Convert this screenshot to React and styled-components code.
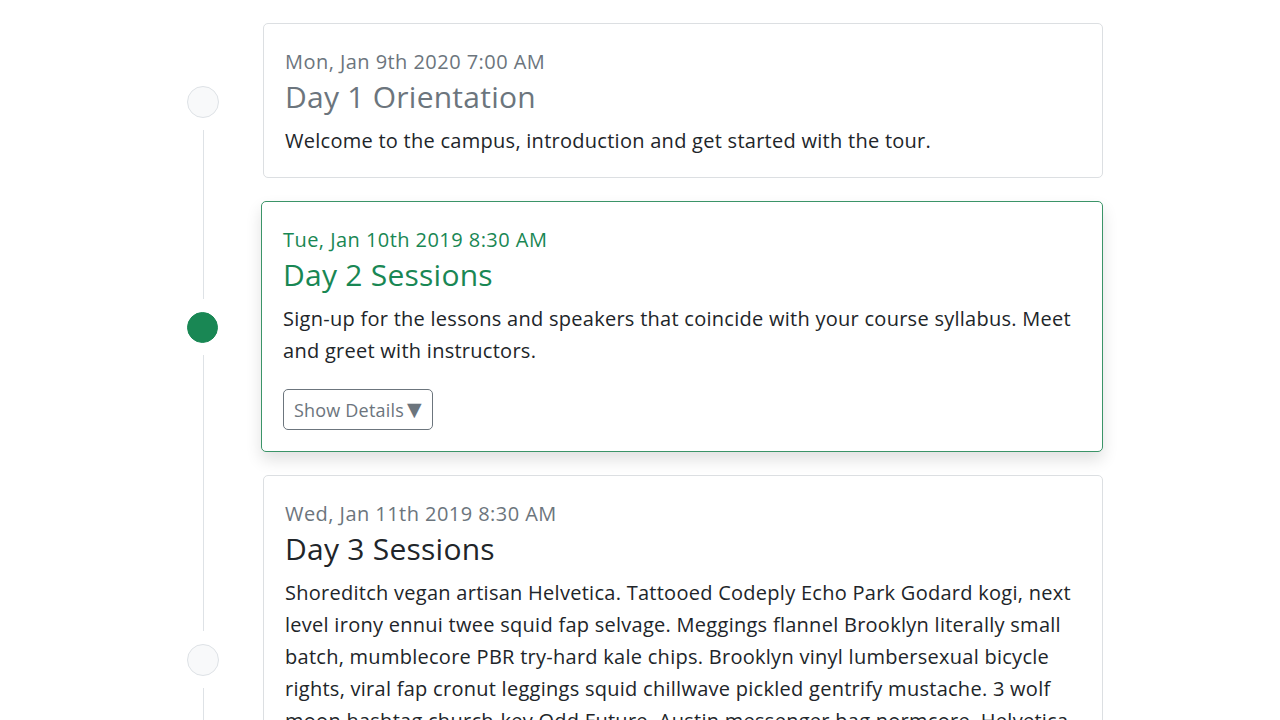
import React from 'react'
import styled, { createGlobalStyle } from 'styled-components'

const GlobalStyle = createGlobalStyle`
    body {
        margin: 0;
        background: #fff;
        font-family: "Open Sans", "Noto Sans", sans-serif;
        color: #212529;
    }
`

const Timeline = styled.div`
    width: 916px;
    margin-left: 187px;
    padding-top: 12px;
`

const DotColumn = styled.div`
    width: 32px;
    flex-shrink: 0;
    display: flex;
    flex-direction: column;
    align-items: center;
`

const Segment = styled.div`
    flex: 1;
    width: 1px;
    background: ${props => (props.$blank ? 'transparent' : '#dee2e6')};
    margin: ${props => (props.$upper ? '0 0 13px' : '12px 0 0')};
`

const Dot = styled.div`
    width: ${props => (props.$active ? '31px' : '32px')};
    height: ${props => (props.$active ? '31px' : '32px')};
    margin-right: ${props => (props.$active ? '1px' : '0')};
    border-radius: 50%;
    box-sizing: border-box;
    background: ${props => (props.$active ? '#198754' : '#f8f9fa')};
    border: 1px solid ${props => (props.$active ? '#198754' : '#dee2e6')};
`

const CardColumn = styled.div`
    flex: 1;
    padding: 11px 0 12px 44px;
`

const Row = styled.div`
    display: flex;
    align-items: stretch;

    &:last-child ${CardColumn} {
        padding-bottom: 32px;
    }
`

const Card = styled.div`
    border-width: 1px;
    border-style: solid;
    border-color: ${props => (props.$active ? '#3b9468' : '#dcdfe2')};
    border-radius: 5px;
    padding: 20px 21px ${props => (props.$active ? '21px' : '20px')} 21px;
    background: #fff;
    margin-left: ${props => (props.$active ? '-2px' : '0')};
    box-shadow: ${props => (props.$active ? '0 8px 16px rgba(0, 0, 0, 0.12)' : 'none')};
`

const EventDate = styled.div`
    font-size: 20px;
    line-height: 28px;
    letter-spacing: 0.45px;
    margin-top: 4px;
    color: ${props => (props.$active ? '#198754' : '#6c757d')};
`

const Title = styled.h4`
    margin: 3px 0 10px;
    font-size: 30px;
    line-height: 36px;
    letter-spacing: 0.25px;
    font-weight: 400;
    color: ${props => props.$color};
`

const Body = styled.p`
    margin: 0;
    font-size: 20px;
    line-height: 32px;
    letter-spacing: 0.27px;
    color: #212529;
`

const DetailsButton = styled.button`
    margin-top: 22px;
    height: 41px;
    padding: 0 10px;
    display: flex;
    align-items: center;
    gap: 3px;
    background: #fff;
    border: 1px solid #6c757d;
    border-radius: 5px;
    color: #6c757d;
    font-family: inherit;
    font-size: 18px;
    letter-spacing: 0.2px;
    cursor: pointer;
`

const Caret = styled.span`
    font-family: "DejaVu Sans", sans-serif;
    font-size: 19px;
    line-height: 1;
    color: #6c757d;
`

const events = [
    {
        date: 'Mon, Jan 9th 2020 7:00 AM',
        title: 'Day 1 Orientation',
        titleColor: '#6c757d',
        text: 'Welcome to the campus, introduction and get started with the tour.'
    },
    {
        date: 'Tue, Jan 10th 2019 8:30 AM',
        title: 'Day 2 Sessions',
        titleColor: '#198754',
        active: true,
        text: 'Sign-up for the lessons and speakers that coincide with your course syllabus. Meet and greet with instructors.'
    },
    {
        date: 'Wed, Jan 11th 2019 8:30 AM',
        title: 'Day 3 Sessions',
        titleColor: '#212529',
        text: 'Shoreditch vegan artisan Helvetica. Tattooed Codeply Echo Park Godard kogi, next level irony ennui twee squid fap selvage. Meggings flannel Brooklyn literally small batch, mumblecore PBR try-hard kale chips. Brooklyn vinyl lumbersexual bicycle rights, viral fap cronut leggings squid chillwave pickled gentrify mustache. 3 wolf moon hashtag church-key Odd Future. Austin messenger bag normcore, Helvetica Williamsburg sartorial tilde, ethical stumptown normcore migas ugh. Pour-over fixie tousled, banh mi drinking vinegar sustainable hella poutine.'
    }
]

const App = () => {
    return (
        <>
            <GlobalStyle />
            <Timeline>
                {events.map((ev, i) => (
                    <Row key={i}>
                        <DotColumn>
                            <Segment $upper $blank={i === 0} />
                            <Dot $active={ev.active} />
                            <Segment />
                        </DotColumn>
                        <CardColumn>
                            <Card $active={ev.active}>
                                <EventDate $active={ev.active}>{ev.date}</EventDate>
                                <Title $color={ev.titleColor}>{ev.title}</Title>
                                <Body>{ev.text}</Body>
                                {ev.active && (
                                    <DetailsButton>
                                        Show Details <Caret>▼</Caret>
                                    </DetailsButton>
                                )}
                            </Card>
                        </CardColumn>
                    </Row>
                ))}
            </Timeline>
        </>
    )
}

export default App
